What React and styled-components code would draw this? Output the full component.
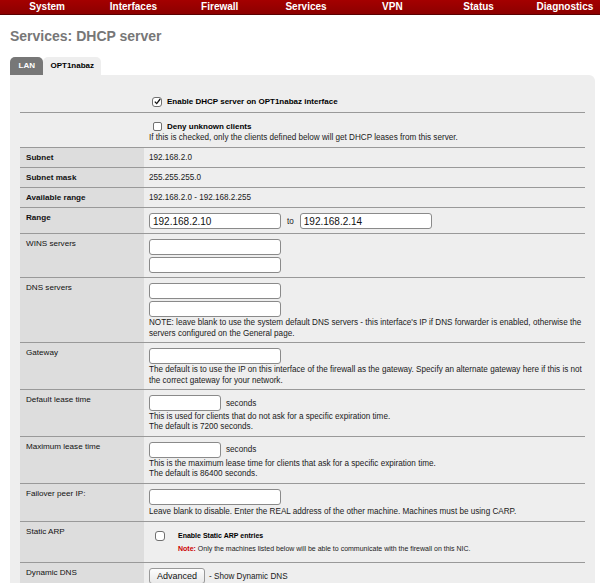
import React from 'react';
import styled, { createGlobalStyle } from 'styled-components';

const GlobalStyle = createGlobalStyle`
body {
    margin: 0;
    background: #fff;
    font-family: "Liberation Sans", Arial, sans-serif;
    color: #000;
}
`;

const NavBar = styled.div`
display: grid;
grid-template-columns: repeat(7, 86.3px);
padding-left: 4px;
height: 14px;
background: linear-gradient(#a40000, #8c0000);
border-bottom: 1px solid #5a0000;
overflow: hidden;
`;

const NavItem = styled.div`
text-align: center;
color: #fff;
font-size: 10px;
font-weight: bold;
line-height: 13px;
white-space: nowrap;
`;

const Page = styled.div`
padding: 0 5px 0 10px;
`;

const Title = styled.h1`
margin: 13px 0 0;
font-size: 14px;
line-height: 16px;
font-weight: bold;
color: #777;
`;

const Tabs = styled.div`
display: flex;
margin-top: 13px;
`;

const Tab = styled.div`
height: 18px;
padding: 0 ${p => (p.active ? '7px' : '8.5px')};
border-radius: 5px 5px 0 0;
background: ${p => (p.active ? '#eee' : '#777')};
color: ${p => (p.active ? '#000' : '#fff')};
font-size: 8px;
font-weight: bold;
line-height: 17px;
`;

const Panel = styled.div`
background: #eee;
border-radius: 0 6px 0 0;
padding: 10px 10px 0;
`;

const Row = styled.div`
display: grid;
grid-template-columns: 124px 1fr;
border-bottom: 1px solid #999;
`;

const LabelCell = styled.div`
background: ${p => (p.empty ? 'transparent' : '#ddd')};
padding: 4px 6px;
font-size: 8.1px;
line-height: 11px;
font-weight: ${p => (p.req ? 'bold' : 'normal')};
color: #111;
`;

const ValueCell = styled.div`
padding: ${p => p.pad || '4px 0 4px 5px'};
font-size: 8.15px;
line-height: 11px;
color: #1a1a1a;
`;

const Line = styled.div`
display: flex;
align-items: center;
gap: ${p => p.gap || '5px'};
`;

const Stack = styled.div`
display: flex;
flex-direction: column;
gap: 2px;
margin-top: 1px;
`;

const TextInput = styled.input`
box-sizing: border-box;
width: ${p => p.w || 132}px;
height: 16px;
padding: 0 3px;
border: 1px solid #8a8a8a;
border-radius: 3px;
background: #fff;
font-family: "Liberation Sans", Arial, sans-serif;
font-size: 10px;
color: #111;
`;

const Hint = styled.div`
margin-top: ${p => p.top || 1}px;
line-height: 10.4px;
`;

const Box = styled.span`
box-sizing: border-box;
display: inline-flex;
align-items: center;
justify-content: center;
flex: none;
width: ${p => p.size || 9}px;
height: ${p => p.size || 9}px;
border: 1px solid #6f6f6f;
border-radius: ${p => (p.size > 9 ? 3 : 2)}px;
background: #fff;
`;

const Strong = styled.span`
font-weight: bold;
color: #000;
font-size: ${p => p.size || 8}px;
`;

const ArpGrid = styled.div`
display: grid;
grid-template-columns: 23px 1fr;
row-gap: 3px;
align-items: center;
padding-left: 6px;
font-size: 7px;
line-height: 10px;
`;

const Red = styled.span`
color: #cc0000;
font-weight: bold;
`;

const Button = styled.button`
height: 16px;
padding: 0 7px;
border: 1px solid #999;
border-radius: 3px;
background: linear-gradient(#fdfdfd, #e9e9e9);
font-family: "Liberation Sans", Arial, sans-serif;
font-size: 9px;
color: #111;
`;

const Check = ({ checked, size }) => (
    <Box size={size}>
        {checked && (
            <svg width="7" height="7" viewBox="0 0 7 7">
                <path d="M0.8 3.6 L2.7 5.6 L6.2 1" fill="none" stroke="#111" strokeWidth="1.3" />
            </svg>
        )}
    </Box>
);

const nav = ['System', 'Interfaces', 'Firewall', 'Services', 'VPN', 'Status', 'Diagnostics'];

const info = [
    ['Subnet', '192.168.2.0'],
    ['Subnet mask', '255.255.255.0'],
    ['Available range', '192.168.2.0 - 192.168.2.255'],
];

const App = () => {
    return (
        <>
            <GlobalStyle />
            <NavBar>
                {nav.map(n => <NavItem key={n}>{n}</NavItem>)}
            </NavBar>
            <Page>
                <Title>Services: DHCP server</Title>
                <Tabs>
                    <Tab>LAN</Tab>
                    <Tab active>OPT1nabaz</Tab>
                </Tabs>
                <Panel>
                    <Row>
                        <LabelCell empty />
                        <ValueCell pad="11px 0 5px 5px">
                            <Line gap="5px" style={{ paddingLeft: 3 }}>
                                <Check checked size={10} />
                                <Strong>Enable DHCP server on OPT1nabaz interface</Strong>
                            </Line>
                        </ValueCell>
                    </Row>
                    <Row>
                        <LabelCell empty />
                        <ValueCell pad="8px 0 4px 5px">
                            <Line gap="5px" style={{ paddingLeft: 4 }}>
                                <Check />
                                <Strong>Deny unknown clients</Strong>
                            </Line>
                            <Hint>If this is checked, only the clients defined below will get DHCP leases from this server.</Hint>
                        </ValueCell>
                    </Row>
                    {info.map(([k, v]) => (
                        <Row key={k}>
                            <LabelCell req>{k}</LabelCell>
                            <ValueCell>{v}</ValueCell>
                        </Row>
                    ))}
                    <Row>
                        <LabelCell req>Range</LabelCell>
                        <ValueCell pad="4px 0 4px 5px">
                            <Stack>
                                <Line gap="6px">
                                    <TextInput defaultValue="192.168.2.10" />
                                    <span>to</span>
                                    <TextInput defaultValue="192.168.2.14" />
                                </Line>
                            </Stack>
                        </ValueCell>
                    </Row>
                    <Row>
                        <LabelCell>WINS servers</LabelCell>
                        <ValueCell pad="4px 0 4px 5px">
                            <Stack>
                                <TextInput />
                                <TextInput />
                            </Stack>
                        </ValueCell>
                    </Row>
                    <Row>
                        <LabelCell>DNS servers</LabelCell>
                        <ValueCell pad="4px 0 3px 5px">
                            <Stack>
                                <TextInput />
                                <TextInput />
                            </Stack>
                            <Hint>NOTE: leave blank to use the system default DNS servers - this interface's IP if DNS forwarder is enabled, otherwise the servers configured on the General page.</Hint>
                        </ValueCell>
                    </Row>
                    <Row>
                        <LabelCell>Gateway</LabelCell>
                        <ValueCell pad="4px 0 3px 5px">
                            <Stack>
                                <TextInput />
                            </Stack>
                            <Hint>The default is to use the IP on this interface of the firewall as the gateway. Specify an alternate gateway here if this is not the correct gateway for your network.</Hint>
                        </ValueCell>
                    </Row>
                    <Row>
                        <LabelCell>Default lease time</LabelCell>
                        <ValueCell pad="4px 0 3px 5px">
                            <Stack>
                                <Line>
                                    <TextInput w={72} />
                                    <span>seconds</span>
                                </Line>
                            </Stack>
                            <Hint>This is used for clients that do not ask for a specific expiration time.<br />The default is 7200 seconds.</Hint>
                        </ValueCell>
                    </Row>
                    <Row>
                        <LabelCell>Maximum lease time</LabelCell>
                        <ValueCell pad="4px 0 3px 5px">
                            <Stack>
                                <Line>
                                    <TextInput w={72} />
                                    <span>seconds</span>
                                </Line>
                            </Stack>
                            <Hint>This is the maximum lease time for clients that ask for a specific expiration time.<br />The default is 86400 seconds.</Hint>
                        </ValueCell>
                    </Row>
                    <Row>
                        <LabelCell>Failover peer IP:</LabelCell>
                        <ValueCell pad="4px 0 4px 5px">
                            <Stack>
                                <TextInput />
                            </Stack>
                            <Hint top={2}>Leave blank to disable. Enter the REAL address of the other machine. Machines must be using CARP.</Hint>
                        </ValueCell>
                    </Row>
                    <Row>
                        <LabelCell>Static ARP</LabelCell>
                        <ValueCell pad="9px 0 8px 5px">
                            <ArpGrid>
                                <Check size={10} />
                                <Strong size={7}>Enable Static ARP entries</Strong>
                                <span />
                                <span><Red>Note:</Red> Only the machines listed below will be able to communicate with the firewall on this NIC.</span>
                            </ArpGrid>
                        </ValueCell>
                    </Row>
                    <Row>
                        <LabelCell>Dynamic DNS</LabelCell>
                        <ValueCell pad="5px 0 5px 5px">
                            <Line gap="4px">
                                <Button>Advanced</Button>
                                <span>- Show Dynamic DNS</span>
                            </Line>
                        </ValueCell>
                    </Row>
                </Panel>
            </Page>
        </>
    );
};

export default App;
